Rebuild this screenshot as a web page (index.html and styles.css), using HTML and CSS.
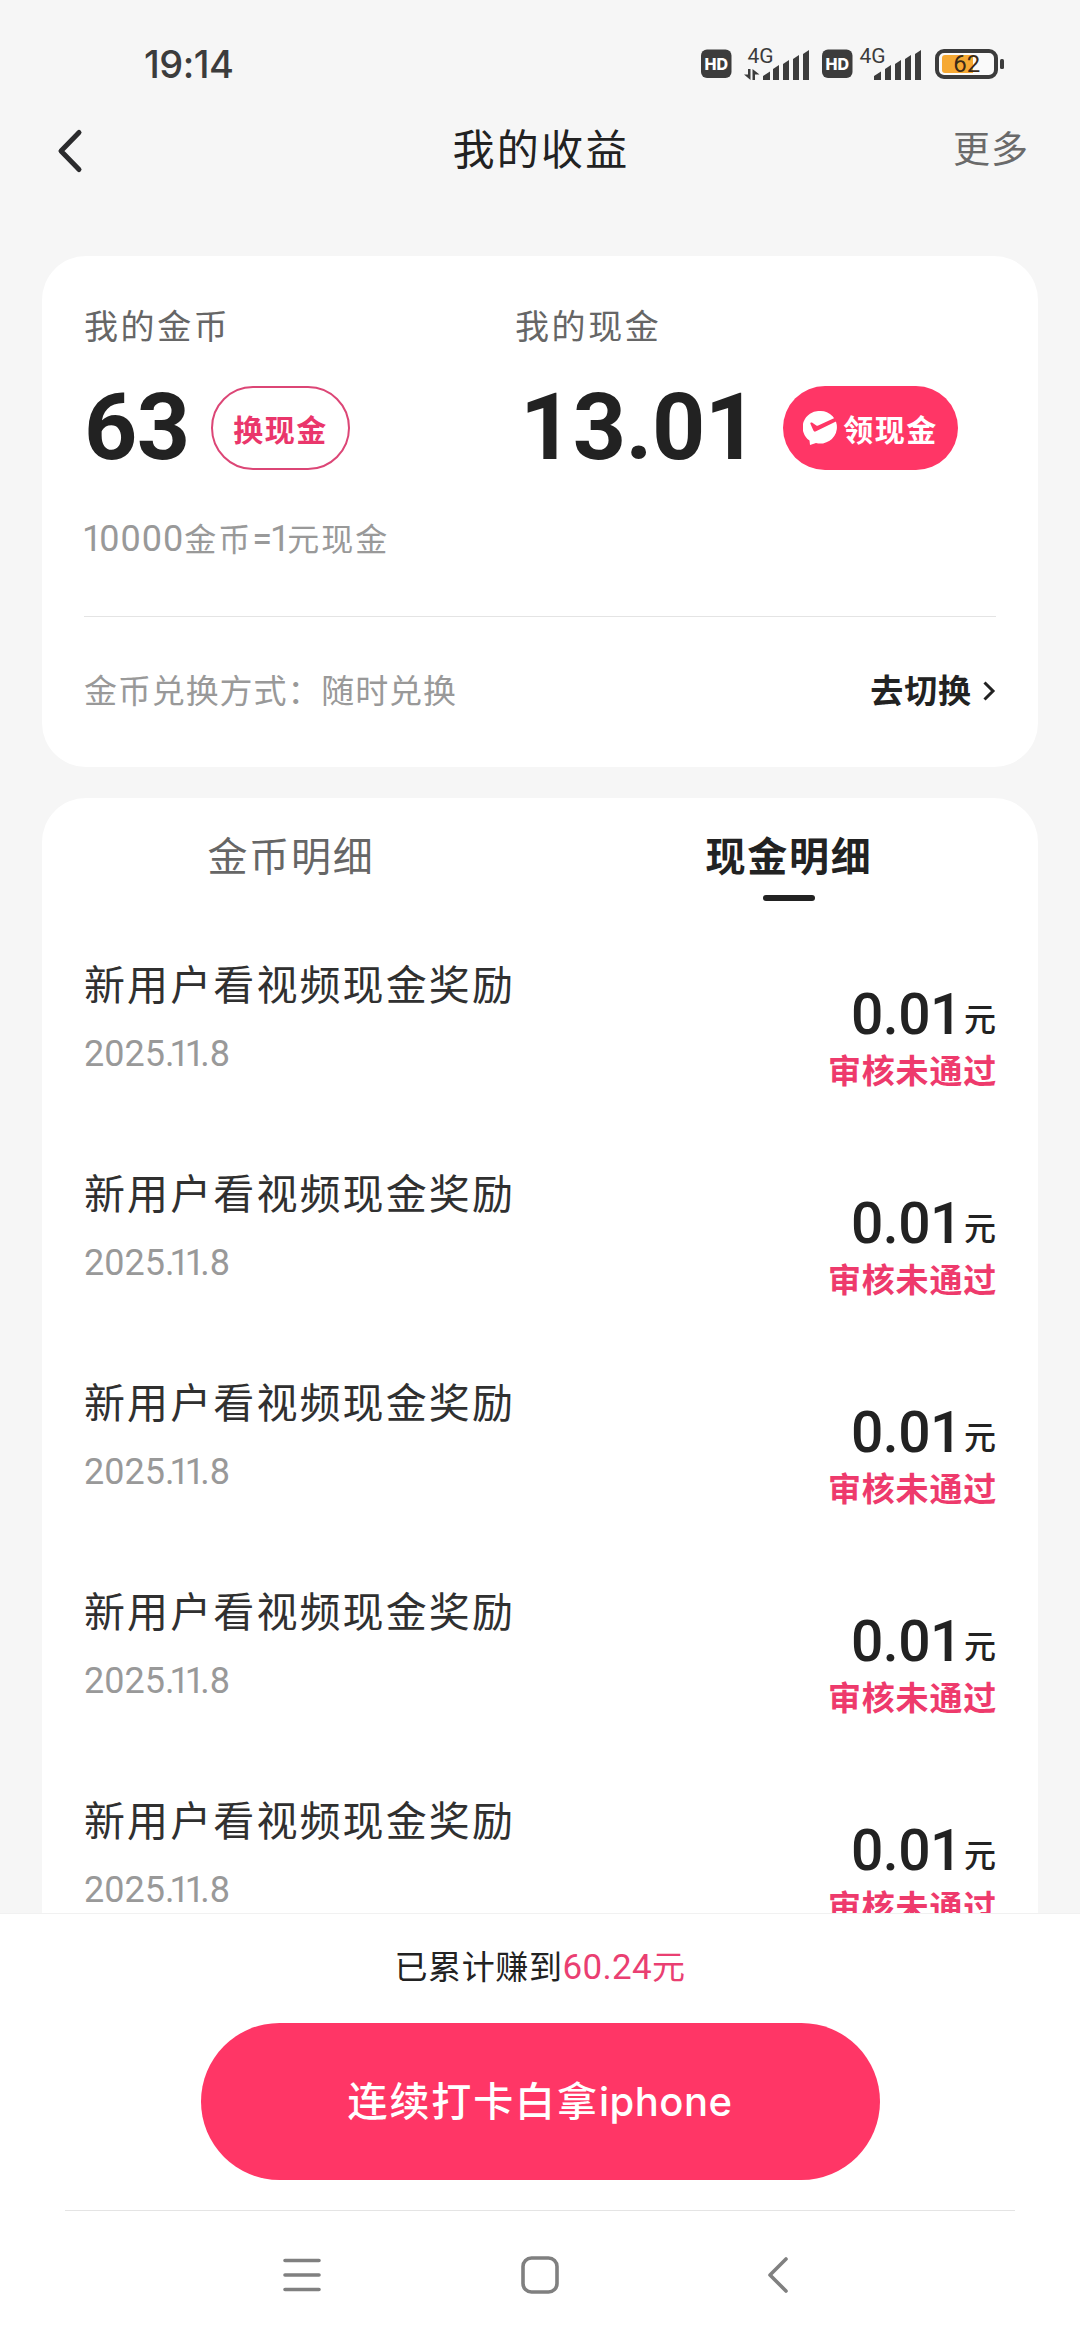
FILE: index.html
```html
<!DOCTYPE html>
<html lang="zh-CN">
<head>
<meta charset="utf-8">
<title>我的收益</title>
<link rel="stylesheet" href="styles.css">
</head>
<body>
<div class="screen">
  <header class="status-bar">
    <span class="clock">19:14</span>
    <div class="status-icons">
      <svg class="hd" width="31" height="30" viewBox="0 0 31 30"><rect y="0.5" width="30.5" height="28.5" rx="6" fill="#3c3c3c"/><text x="15.2" y="20.6" text-anchor="middle" class="hd-text">HD</text></svg>
      <svg class="signal" width="66" height="42" viewBox="0 -8 66 42"><text x="3.5" y="16.5" class="net-text" textLength="26">4G</text><g fill="#3c3c3c"><path d="M4 23h2.5v11L0 28.500h4zM8.500 34V23l7 5.500H11V34zM19 30l7-4.500V34h-7zM29 23l6-4v15h-6zM39 18l6-4v20h-6zM49 13l6-4v25h-6zM59 8l6-4v30h-6z"/></g></svg>
      <svg class="hd" width="31" height="30" viewBox="0 0 31 30"><rect y="0.5" width="30.5" height="28.5" rx="6" fill="#3c3c3c"/><text x="15.2" y="20.6" text-anchor="middle" class="hd-text">HD</text></svg>
      <svg class="signal second" width="63" height="42" viewBox="0 -8 63 42"><text x="0.500" y="16.5" class="net-text" textLength="26">4G</text><path fill="#3c3c3c" d="M15 30l7-4.500V34h-7zM26 23l6-4v15h-6zM36 18l6-4v20h-6zM46 13l6-4v25h-6zM56 8l6-4v30h-6z"/></svg>
      <svg class="battery" width="70" height="30" viewBox="0 0 70 30"><rect x="2" y="2" width="59" height="26" rx="7" fill="#fafafa" stroke="#3c3c3c" stroke-width="4"/><path d="M10 6h28v18H10a3 3 0 0 1-3-3V9a3 3 0 0 1 3-3z" fill="#f6a933"/><rect x="65" y="10" width="4" height="10" rx="1.5" fill="#3c3c3c"/><text x="31.800" y="23.300" text-anchor="middle" class="battery-text">62</text></svg>
    </div>
  </header>

  <nav class="title-bar">
    <svg class="back" width="30" height="46" viewBox="0 0 30 46"><path d="M24 4.500L6 23l18 18.500" fill="none" stroke="#2b2b2d" stroke-width="5" stroke-linecap="round" stroke-linejoin="round"/></svg>
    <h1 class="page-title">我的收益</h1>
    <a class="more">更多</a>
  </nav>

  <main class="content">
    <section class="card balance">
      <div class="balance-grid">
        <div class="account">
          <div class="label">我的金币</div>
          <div class="value-row"><span class="value">63</span><button class="pill outline">换现金</button></div>
        </div>
        <div class="account cash">
          <div class="label">我的现金</div>
          <div class="value-row"><span class="value">13.01</span><button class="pill solid"><svg width="34" height="34" viewBox="0 0 34 34"><path fill="#fff" d="M17 0a16.500 16.300 0 1 1-4 32l-6 2-.5-4.500A16.500 16.300 0 0 1 17 0z"/><path fill="#ff3666" d="M7.300 12.500c0-1 .9-1.400 1.700-.9l4.300 2.800c.6.4 1.200.4 1.900.1L32 6.800l2 3.200-21 10.300c-1.200.6-2 .4-2.600-.8z"/></svg>领现金</button></div>
        </div>
      </div>
      <div class="rate"><span class="num"><span class="tight-one">1</span>0000</span>金币<span class="num eq">=<span class="tight-one">1</span></span>元现金</div>
      <div class="exchange">
        <span class="mode">金币兑换方式：随时兑换</span>
        <a class="switch">去切换<svg width="14" height="22" viewBox="0 0 14 22"><path d="M2.500 2.500l8.500 8.500-8.500 8.500" fill="none" stroke="#222" stroke-width="3"/></svg></a>
      </div>
    </section>

    <section class="card details">
      <div class="tabs"><div class="tab">金币明细</div><div class="tab active">现金明细</div></div>
      <ul class="records">
        <li class="record"><div><div class="name">新用户看视频现金奖励</div><div class="date">2025<span class="ones">.11</span>.8</div></div><div class="result"><div class="amount">0.01<span class="unit">元</span></div><div class="state">审核未通过</div></div></li>
        <li class="record"><div><div class="name">新用户看视频现金奖励</div><div class="date">2025<span class="ones">.11</span>.8</div></div><div class="result"><div class="amount">0.01<span class="unit">元</span></div><div class="state">审核未通过</div></div></li>
        <li class="record"><div><div class="name">新用户看视频现金奖励</div><div class="date">2025<span class="ones">.11</span>.8</div></div><div class="result"><div class="amount">0.01<span class="unit">元</span></div><div class="state">审核未通过</div></div></li>
        <li class="record"><div><div class="name">新用户看视频现金奖励</div><div class="date">2025<span class="ones">.11</span>.8</div></div><div class="result"><div class="amount">0.01<span class="unit">元</span></div><div class="state">审核未通过</div></div></li>
        <li class="record"><div><div class="name">新用户看视频现金奖励</div><div class="date">2025<span class="ones">.11</span>.8</div></div><div class="result"><div class="amount">0.01<span class="unit">元</span></div><div class="state">审核未通过</div></div></li>
      </ul>
    </section>
  </main>

  <footer class="bottom">
    <div class="total">已累计赚到<span class="earned"><span class="num">60.24</span>元</span></div>
    <button class="cta">连续打卡白拿<span class="latin">iphone</span></button>
    <div class="system-nav">
      <svg width="38" height="38" viewBox="0 0 38 38"><path d="M2 4.500h34M2 19h34M2 33.500h34" stroke="#808080" stroke-width="3.600" stroke-linecap="round"/></svg>
      <svg width="38" height="38" viewBox="0 0 38 38"><rect x="2" y="2" width="34" height="34" rx="8.500" fill="none" stroke="#808080" stroke-width="3.600"/></svg>
      <svg width="38" height="38" viewBox="0 0 38 38"><path d="M27 3L11 19l16 16" fill="none" stroke="#808080" stroke-width="3.600" stroke-linecap="round" stroke-linejoin="round"/></svg>
    </div>
  </footer>
</div>
</body>
</html>
```

FILE: styles.css
```css
* { box-sizing: border-box; }
body {
  margin: 0;
  background: #f6f6f6;
  font-family: Inter, "Noto Sans CJK SC", sans-serif;
  color: #222;
}
button {
  padding: 0;
  border: 0;
  font-family: inherit;
}
svg { display: block; flex: none; }

.screen {
  width: 1080px;
  height: 2340px;
  display: flex;
  flex-direction: column;
  overflow: hidden;
}

/* status bar */
.status-bar {
  height: 100px;
  flex: none;
  display: flex;
  justify-content: space-between;
  padding: 46px 75px 0 144px;
}
.clock {
  height: 36px;
  line-height: 36px;
  font-size: 38px;
  font-weight: 500;
  letter-spacing: -0.500px;
  color: #3c3c3c;
}
.status-icons { display: flex; align-items: flex-start; }
.hd { margin-top: 3px; }
.hd-text { font: 800 16px Inter, sans-serif; fill: #fff; }
.signal { margin: -8px 12px 0; }
.signal.second { margin: -8px 13px 0 6px; }
.net-text { font: 400 21px Roboto, sans-serif; fill: #3c3c3c; }
.battery { margin-top: 3px; }
.battery-text { font: 400 24px Roboto, sans-serif; fill: #3a2a18; }

/* title bar */
.title-bar {
  height: 156px;
  flex: none;
  display: grid;
  grid-template-columns: 160px 1fr 160px;
  align-items: start;
  padding: 20px 53px 0 55px;
  line-height: 60px;
}
.back { margin-top: 8px; }
.page-title {
  margin: 0;
  text-align: center;
  font-size: 42px;
  font-weight: 400;
  letter-spacing: 2.200px;
}
.more {
  margin-right: -2px;
  text-align: right;
  font-size: 37px;
  letter-spacing: 1px;
  color: #6a6a6a;
}

/* cards */
.content {
  flex: 1;
  min-height: 0;
  overflow: hidden;
  display: flex;
  flex-direction: column;
  gap: 31px;
  padding: 0 42px;
}
.card {
  flex: none;
  background: #fff;
  border-radius: 44px;
}
.balance { height: 511px; padding: 46px 42px 0; }
.balance-grid {
  display: grid;
  grid-template-columns: 431px 1fr;
}
.label {
  line-height: 50px;
  font-size: 34px;
  letter-spacing: 2.600px;
  color: #666;
}
.value-row {
  height: 84px;
  margin-top: 34px;
  display: flex;
  align-items: center;
}
.value {
  line-height: 86px;
  font-family: Roboto, sans-serif;
  font-size: 93px;
  font-weight: 700;
  letter-spacing: -0.600px;
}
.account .value { width: 127px; }
.cash .value { width: 268px; padding-left: 5px; }
.pill {
  height: 84px;
  border-radius: 42px;
  font-size: 30px;
  font-weight: 700;
  letter-spacing: 1.500px;
  display: flex;
  align-items: center;
  justify-content: center;
  white-space: nowrap;
}
.pill.outline {
  width: 139px;
  border: 2px solid #dc4676;
  background: #fff;
  color: #ea366b;
}
.pill.solid {
  width: 175px;
  gap: 6px;
  background: #ff3666;
  color: #fff;
}
.num { font-family: Roboto, sans-serif; font-size: 36px; letter-spacing: 1px; }
.rate {
  margin-top: 44px;
  line-height: 50px;
  font-size: 32px;
  letter-spacing: 2px;
  color: #999;
  text-indent: -2px;
}
.tight-one { letter-spacing: -3px; }
.eq { letter-spacing: -2px; }
.exchange {
  margin-top: 51px;
  border-top: 1px solid #e4e4e4;
  padding-top: 49px;
  display: flex;
  justify-content: space-between;
  line-height: 50px;
  font-size: 33px;
  letter-spacing: 0.900px;
}
.mode { color: #999; }
.switch {
  display: flex;
  align-items: center;
  gap: 10px;
  font-weight: 600;
}

/* record list */
.details { height: 1300px; padding: 0 42px; }
.tabs {
  display: grid;
  grid-template-columns: 1fr 1fr;
  margin: 0 -42px;
  height: 138px;
  padding-top: 29px;
}
.tab {
  display: flex;
  flex-direction: column;
  align-items: center;
  line-height: 60px;
  font-size: 40px;
  letter-spacing: 1.700px;
  color: #666;
}
.tab.active { color: #222; font-weight: 600; }
.tab.active::after {
  content: "";
  width: 52px;
  height: 6px;
  margin-top: 8px;
  border-radius: 3px;
  background: #222;
}
.records { list-style: none; margin: 0; padding: 0; }
.record {
  height: 209px;
  display: flex;
  justify-content: space-between;
}
.name {
  margin-top: 19px;
  line-height: 60px;
  font-size: 41px;
  letter-spacing: 2.100px;
  color: #303030;
}
.date {
  margin-top: 14px;
  line-height: 50px;
  font-family: Roboto, sans-serif;
  font-size: 36px;
  color: #999;
}
.ones { letter-spacing: -4.900px; }
.result { text-align: right; }
.amount {
  height: 70px;
  margin-top: 44px;
  line-height: 70px;
  font-family: Roboto, "Noto Sans CJK SC", sans-serif;
  font-size: 57px;
  font-weight: 500;
  letter-spacing: -0.500px;
}
.unit {
  margin-left: 2px;
  font-size: 32px;
  font-weight: 500;
  letter-spacing: 0;
  line-height: 1;
  vertical-align: 3px;
}
.state {
  margin: -4px -1px 0 0;
  line-height: 50px;
  font-size: 33px;
  font-weight: 600;
  letter-spacing: 0.800px;
  color: #ee3a6c;
}

/* bottom panel */
.bottom {
  height: 427px;
  flex: none;
  background: #fff;
  border-top: 1px solid #f1f1f1;
  display: flex;
  flex-direction: column;
  align-items: center;
}
.total {
  margin-top: 28px;
  height: 50px;
  line-height: 50px;
  font-size: 33px;
  letter-spacing: 0.600px;
}
.earned { color: #ea3f72; }
.total .num { font-size: 35px; letter-spacing: 0.300px; }
.cta {
  flex: none;
  width: 679px;
  height: 157px;
  margin-top: 31px;
  padding-bottom: 5px;
  border-radius: 79px;
  background: #ff3666;
  color: #fff;
  font-size: 40px;
  font-weight: 500;
  letter-spacing: 1.900px;
}
.latin { letter-spacing: 0.500px; }
.system-nav {
  width: 950px;
  margin-top: 30px;
  padding: 45px 218px 0;
  border-top: 1px solid #e4e4e4;
  display: flex;
  justify-content: space-between;
}
```
